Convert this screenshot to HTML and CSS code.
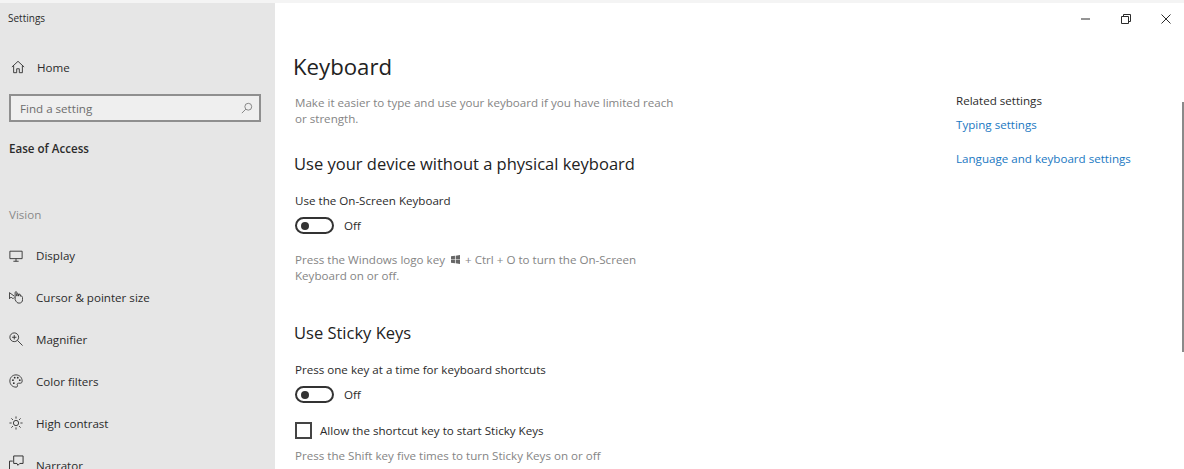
FILE: index.html
```html
<!DOCTYPE html>
<html lang="en">
<head>
    <meta charset="UTF-8">
    <title>Settings</title>
    <link rel="stylesheet" href="styles.css">
</head>
<body>
    <div class="window">
        <aside class="sidebar">
            <div class="app-title">Settings</div>
            <a class="home-link">
                <svg class="nav-icon" viewBox="0 0 16 16"><path d="M1 8 8 1.500 15 8M3 6.500V14.500H6.500V10H9.500V14.500H13V6.500"/></svg>
                <span>Home</span>
            </a>
            <div class="search">
                <span>Find a setting</span>
                <svg class="search-icon" viewBox="0 0 14 14"><circle cx="8.500" cy="5.500" r="4"/><path d="M5.600 8.400 1 13"/></svg>
            </div>
            <div class="section-title">Ease of Access</div>
            <div class="group-title">Vision</div>
            <a class="nav-item first-item">
                <svg class="nav-icon" viewBox="0 0 16 16"><path d="M1 2.500H15V11H1ZM8 11V14M5 14H11"/></svg>
                <span>Display</span>
            </a>
            <a class="nav-item">
                <svg class="nav-icon" viewBox="0 0 16 16"><path d="M.5 3V10L2.500 8 4.500 10 6 8.500M.5 3 6 7"/><path d="M7 11V3C7 1.500 9 1.500 9 3V7M9 7V5C9 4 11 4 11 5V7M11 7V5.500C11 4.500 13 4.500 13 5.500V7M13 7C14.500 6.500 15.500 7.500 15.500 8.500V11C15.500 13.500 14 15 11.500 15 9.500 15 8.500 14 7 11"/></svg>
                <span>Cursor &amp; pointer size</span>
            </a>
            <a class="nav-item">
                <svg class="nav-icon" viewBox="0 0 16 16"><circle cx="6" cy="6" r="5"/><path d="M9.600 9.600 15.500 15.500M6 3.500V8.500M3.500 6H8.500"/></svg>
                <span>Magnifier</span>
            </a>
            <a class="nav-item">
                <svg class="nav-icon" viewBox="0 0 16 16"><path d="M8 1C4 1 1 4 1 8C1 12 4 15 8 15C10 15 10 13.500 9.500 12.500C9 11.500 9.500 10.500 11 10.500H13C14.500 10.500 15 9.500 15 8C15 4 12 1 8 1Z"/><circle class="dot" cx="4.500" cy="7" r="1"/><circle class="dot" cx="6.500" cy="4.200" r="1"/><circle class="dot" cx="10" cy="4.200" r="1"/><circle class="dot" cx="12.300" cy="7" r="1"/><circle class="dot" cx="5.500" cy="10.500" r="1"/></svg>
                <span>Color filters</span>
            </a>
            <a class="nav-item">
                <svg class="nav-icon" viewBox="0 0 16 16"><circle cx="8" cy="8" r="3"/><path d="M8 .5V3M8 13V15.500M.5 8H3M13 8H15.500M2.700 2.700 4.500 4.500M11.500 11.500 13.300 13.300M2.700 13.300 4.500 11.500M11.500 4.500 13.300 2.700"/></svg>
                <span>High contrast</span>
            </a>
            <a class="nav-item">
                <svg class="nav-icon narrator-icon" viewBox="0 0 16 16"><path d="M.5 15V6.500H4M5 1H15V9H11.500L9.500 11 8.500 9H5Z"/></svg>
                <span>Narrator</span>
            </a>
        </aside>

        <main class="content">
            <div class="window-controls">
                <svg viewBox="0 0 10 10"><path d="M0 5H9"/></svg>
                <svg viewBox="0 0 10 10"><path d="M.5 2.500H7.500V9.500H.5ZM2.500 2.500V.5H9.500V7.500H7.500"/></svg>
                <svg viewBox="0 0 10 10"><path d="M.5 .5 9.500 9.500M9.500 .5 .5 9.500"/></svg>
            </div>
            <div class="columns">
                <div class="main-col">
                    <h1>Keyboard</h1>
                    <p class="hint intro">Make it easier to type and use your keyboard if you have limited reach or strength.</p>

                    <h2>Use your device without a physical keyboard</h2>
                    <div class="label">Use the On-Screen Keyboard</div>
                    <div class="toggle-row">
                        <span class="toggle"></span>
                        <span>Off</span>
                    </div>
                    <p class="hint">Press the Windows logo key <svg class="win-logo" viewBox="0 0 10 10"><path d="M0 1.500 4.400 .8V4.700H0ZM5.200 .7 10 0V4.700H5.200ZM0 5.400H4.400V9.200L0 8.500ZM5.200 5.400H10V10L5.200 9.300Z"/></svg> + Ctrl + O to turn the On-Screen Keyboard on or off.</p>

                    <h2 class="sticky-title">Use Sticky Keys</h2>
                    <div class="label">Press one key at a time for keyboard shortcuts</div>
                    <div class="toggle-row">
                        <span class="toggle"></span>
                        <span>Off</span>
                    </div>
                    <div class="check-row">
                        <span class="checkbox"></span>
                        <span>Allow the shortcut key to start Sticky Keys</span>
                    </div>
                    <p class="hint check-hint">Press the Shift key five times to turn Sticky Keys on or off</p>
                </div>
                <div class="related">
                    <div class="related-title">Related settings</div>
                    <a class="link">Typing settings</a>
                    <a class="link">Language and keyboard settings</a>
                </div>
            </div>
            <div class="scrollbar"></div>
        </main>
    </div>
</body>
</html>
```

FILE: styles.css
```css
html, body {
    margin: 0;
    height: 100%;
    overflow: hidden;
}
body {
    font-family: "Open Sans", "Noto Sans", sans-serif;
    font-size: 11.600px;
    color: #2b2b2b;
    background-color: white;
}
.window {
    display: flex;
    height: 469px;
    box-sizing: border-box;
    border-top: 3px solid #f4f4f4;
}
svg {
    fill: none;
    stroke: currentColor;
    stroke-width: 1;
}

/* sidebar */
.sidebar {
    width: 275px;
    flex-shrink: 0;
    background-color: #e6e6e6;
    overflow: hidden;
}
.app-title {
    font-size: 10px;
    line-height: 14px;
    margin: 8px 0 0 8px;
}
.home-link {
    display: flex;
    align-items: center;
    margin: 33px 0 0 11px;
    height: 18px;
}
.home-link span {
    margin-left: 12px;
}
.nav-icon {
    width: 14px;
    height: 14px;
    flex-shrink: 0;
}
.narrator-icon {
    width: 15px;
    height: 15px;
    margin: -5px -1px 0 0;
}
.dot {
    fill: currentColor;
    stroke: none;
}
.search {
    display: flex;
    align-items: center;
    justify-content: space-between;
    box-sizing: border-box;
    width: 252px;
    height: 28px;
    margin: 18px 0 0 9px;
    padding: 0 6px 0 9px;
    background-color: #efefef;
    border: 2px solid #8f8f8f;
    color: #6d6d6d;
}
.search-icon {
    width: 12px;
    height: 12px;
    color: #777;
}
.section-title {
    font-weight: 600;
    line-height: 16px;
    margin: 19px 0 0 9px;
}
.group-title {
    color: #8a8a8a;
    line-height: 16px;
    margin: 50px 0 0 9px;
}
.nav-item {
    display: flex;
    align-items: center;
    height: 18px;
    margin: 23.900px 0 0 9px;
}
.first-item {
    margin-top: 23.600px;
}
.nav-item span {
    margin-left: 13px;
}

/* main area */
.content {
    position: relative;
    flex: 1;
    min-width: 0;
}
.window-controls {
    display: flex;
    justify-content: flex-end;
    gap: 30px;
    padding: 11px 13px 0 0;
    height: 10px;
}
.window-controls svg {
    width: 10px;
    height: 10px;
}
.columns {
    display: flex;
    padding-left: 20px;
}
.main-col {
    width: 383px;
    flex-shrink: 0;
}
h1 {
    font-size: 22.200px;
    font-weight: 400;
    line-height: 32px;
    margin: 27px 0 0 -2px;
    color: #222;
}
h2 {
    font-size: 16.500px;
    font-weight: 400;
    line-height: 22px;
    margin: 26.500px 0 0 -1px;
    color: #222;
}
.hint {
    color: #858585;
    line-height: 16px;
    margin: 0;
}
.intro {
    margin-top: 12px;
    line-height: 15.500px;
}
.label {
    line-height: 16px;
    margin-top: 18px;
}
.toggle-row {
    display: flex;
    align-items: center;
    gap: 10px;
    margin-top: 8px;
    height: 18px;
}
.toggle {
    display: block;
    box-sizing: border-box;
    width: 39px;
    height: 17px;
    border: 2px solid #333;
    border-radius: 9px;
    padding: 2.500px 0 0 4px;
}
.toggle::before {
    content: "";
    display: block;
    width: 8px;
    height: 8px;
    border-radius: 50%;
    background-color: #333;
}
.toggle-row + .hint {
    margin-top: 17px;
}
.sticky-title {
    margin-top: 38px;
}
.check-row {
    display: flex;
    align-items: center;
    gap: 8px;
    margin-top: 18px;
    height: 18px;
}
.checkbox {
    display: block;
    box-sizing: border-box;
    width: 17px;
    height: 17px;
    border: 2px solid #444;
}
.check-hint {
    margin-top: 8px;
}
.win-logo {
    width: 9px;
    height: 9px;
    margin: 0 2px 0 3px;
    fill: #666;
    stroke: none;
}
.related {
    margin-left: 278px;
    padding-top: 69px;
}
.related-title {
    line-height: 16px;
}
.link {
    display: block;
    color: #1a78c2;
    line-height: 16px;
    margin-top: 8px;
}
.link + .link {
    margin-top: 18px;
}
.scrollbar {
    position: absolute;
    right: 0;
    top: 99px;
    width: 2px;
    height: 250px;
    background-color: #8a8a8a;
}
```
